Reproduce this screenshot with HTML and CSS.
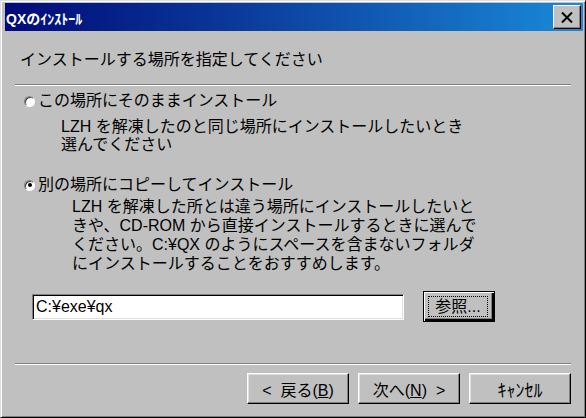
FILE: index.html
```html
<!DOCTYPE html>
<html lang="ja">
<head>
  <meta charset="UTF-8" />
  <title>QXのインストール</title>
  <link rel="stylesheet" href="styles.css">
</head>
<body>
  <div class="window">
    <div class="titlebar">
      <span class="title">QXのｲﾝｽﾄｰﾙ</span>
      <button class="close">
        <svg width="12" height="11" viewBox="0 0 12 11"><path d="M1 0.5 L11 10.5 M11 0.5 L1 10.5" stroke="#000" stroke-width="2"/></svg>
      </button>
    </div>
    <div class="content">
      <p class="heading">インストールする場所を指定してください</p>
      <div class="rule"></div>

      <label class="option">
        <span class="radio"></span>この場所にそのままインストール
      </label>
      <p class="desc desc-one">LZH を解凍したのと同じ場所にインストールしたいとき<br>選んでください</p>

      <label class="option option-two">
        <span class="radio checked"></span>別の場所にコピーしてインストール
      </label>
      <p class="desc desc-two">LZH を解凍した所とは違う場所にインストールしたいと<br>きや、CD-ROM から直接インストールするときに選んで<br>ください。C:¥QX のようにスペースを含まないフォルダ<br>にインストールすることをおすすめします。</p>

      <div class="pathrow">
        <div class="pathbox">C:¥exe¥qx</div>
        <button class="btn browse"><span class="focus">参照...</span></button>
      </div>

      <div class="rule rule-bottom"></div>

      <div class="buttons">
        <button class="btn nav">&lt;&nbsp;&nbsp;戻る(<u>B</u>)</button>
        <button class="btn nav">次へ(<u>N</u>)&nbsp;&nbsp;&gt;</button>
        <button class="btn nav cancel">ｷｬﾝｾﾙ</button>
      </div>
    </div>
  </div>
</body>
</html>
```

FILE: styles.css
```css
body {
  margin: 0;
  font-family: "Liberation Sans", "Noto Sans CJK JP", sans-serif;
  background: #c0c0c0;
}

.window {
  width: 586px;
  height: 418px;
  box-sizing: border-box;
  background: #c0c0c0;
  border: 1px solid;
  border-color: #dfdfdf #000 #000 #dfdfdf;
  box-shadow: inset 1px 1px #fff, inset -1px -1px #808080;
  padding: 2px 2px 2px 4px;
  display: flex;
  flex-direction: column;
}

.titlebar {
  height: 28px;
  background: linear-gradient(to right, #000a78, #0a3a9a 40%, #1a8ad8);
  display: flex;
  align-items: center;
  justify-content: space-between;
  padding: 0 2px 0 1px;
}

.title {
  color: #fff;
  font-weight: bold;
  font-size: 14px;
  margin-top: 2px;
}

.close {
  width: 28px;
  height: 24px;
  padding: 0;
  background: #c0c0c0;
  border: 1px solid;
  border-color: #fff #000 #000 #fff;
  box-shadow: inset -1px -1px #808080;
  display: flex;
  align-items: center;
  justify-content: center;
}

.content {
  flex: 1;
  font-size: 16px;
  color: #000;
}

.heading {
  margin: 19px 0 0 15px;
  line-height: 20px;
}

.rule {
  margin: 14px 12px 0 10px;
  border-top: 1px solid #808080;
  border-bottom: 1px solid #fff;
}

.option {
  display: flex;
  align-items: center;
  margin: 5px 0 0 19px;
  line-height: 20px;
}

.option-two {
  margin-top: 21px;
}

.radio {
  width: 11px;
  height: 11px;
  box-sizing: border-box;
  border-radius: 50%;
  background: #fff;
  border: 1px solid;
  border-color: #808080 #fff #fff #808080;
  box-shadow: inset 1px 1px #404040;
  margin-right: 3px;
  display: flex;
  align-items: center;
  justify-content: center;
}

.radio.checked::after {
  content: "";
  width: 4px;
  height: 4px;
  border-radius: 50%;
  background: #000;
}

.desc {
  margin: 7px 0 0 56px;
  line-height: 18px;
}

.desc-two {
  margin: 2px 0 0 67px;
  line-height: 19px;
}

.pathrow {
  display: flex;
  align-items: center;
  margin: 18px 0 0 27px;
  gap: 19px;
}

.pathbox {
  width: 372px;
  height: 26px;
  box-sizing: border-box;
  background: #fff;
  border: 1px solid;
  border-color: #808080 #fff #fff #808080;
  box-shadow: inset 1px 1px #000, inset -1px -1px #dfdfdf;
  padding: 0 3px;
  line-height: 24px;
  font-size: 16px;
}

.btn {
  background: #c0c0c0;
  font-family: inherit;
  font-size: 16px;
  color: #000;
  border: 1px solid;
  border-color: #fff #000 #000 #fff;
  box-shadow: inset -1px -1px #808080, inset 1px 1px #dfdfdf;
  padding: 0;
}

.browse {
  width: 72px;
  height: 31px;
  border: 1px solid #000;
  box-shadow: inset 1px 1px #fff, inset -2px -2px #000, inset -3px -3px #808080;
  display: flex;
  align-items: center;
  justify-content: center;
}

.focus {
  border: 1px dotted #000;
  width: 58px;
  height: 19px;
  line-height: 19px;
  text-align: center;
  margin: 0 2px 1px 0;
}

.rule-bottom {
  margin: 41px 12px 0 10px;
}

.buttons {
  display: flex;
  justify-content: flex-end;
  gap: 9px;
  margin: 8px 12px 0 0;
}

.nav {
  width: 102px;
  height: 31px;
}

.cancel {
  font-size: 18px;
}
```
